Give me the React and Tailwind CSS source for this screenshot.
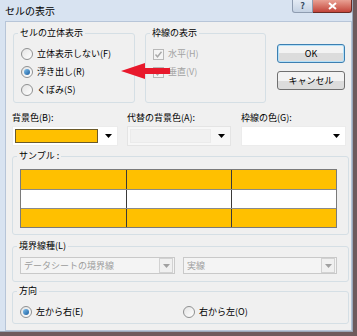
import React from "react"

const font = { fontFamily: "'Noto Sans CJK JP', 'Noto Sans', sans-serif" }

function Group({ label, className, children }) {
  return (
    <div className={`relative border border-[#d5dfe5] rounded-[3px] ${className}`}>
      <span className="absolute -top-[8px] left-[4px] px-[2px] bg-[#f0f0f0] text-[9px] leading-[14px] text-black">
        {label}
      </span>
      {children}
    </div>
  )
}

function Radio({ checked, label }) {
  return (
    <div className="flex items-center gap-[4px] h-[18px]">
      <span className="w-[12px] h-[12px] rounded-full border border-[#8f9091] bg-gradient-to-br from-[#e4e4e4] to-[#ffffff] flex items-center justify-center">
        {checked && <span className="w-[6px] h-[6px] rounded-full bg-gradient-to-br from-[#7fc2ef] to-[#1a5e9e]" />}
      </span>
      <span className="text-[9px] leading-[12px] text-black">{label}</span>
    </div>
  )
}

function Check({ label }) {
  return (
    <div className="flex items-center gap-[4px] h-[18px]">
      <span className="w-[11px] h-[11px] border border-[#b8b8b8] bg-[#f4f4f4] flex items-center justify-center">
        <svg width="9" height="9" viewBox="0 0 9 9">
          <path d="M1.5 4.5 L3.5 6.8 L7.5 1.8" fill="none" stroke="#a8a8a8" strokeWidth="1.4" />
        </svg>
      </span>
      <span className="text-[9px] leading-[12px] text-[#a3a3a3]">{label}</span>
    </div>
  )
}

function Arrow({ color = "#000" }) {
  return (
    <svg width="7" height="4" viewBox="0 0 7 4">
      <path d="M0 0 H7 L3.5 4 Z" fill={color} />
    </svg>
  )
}

function Picker({ width, swatch, disabled }) {
  return (
    <div
      className={`h-[20px] flex items-center pl-[2px] pr-[5px] border ${disabled ? "border-[#e4e4e4] bg-[#f7f7f7]" : "border-[#ececec] bg-white"}`}
      style={{ width }}
    >
      <div
        className={`h-[14px] flex-1 ${swatch ? "bg-[#ffc000] border border-[#6b5a2a]" : disabled ? "bg-[#f1f1f1] border border-[#ebebeb]" : ""}`}
      />
      <div className="w-[14px] flex justify-end">
        {!disabled && <Arrow />}
        {disabled && <Arrow />}
      </div>
    </div>
  )
}

function Combo({ width, text }) {
  return (
    <div className="h-[17px] flex items-center border border-[#c9c9c9] bg-[#f4f4f4]" style={{ width }}>
      <span className="flex-1 pl-[3px] text-[9px] leading-[12px] text-[#9c9c9c]">{text}</span>
      <div className="w-[14px] h-[15px] mr-[1px] border border-[#d2d2d2] bg-[#f0f0f0] flex items-center justify-center">
        <Arrow color="#a0a0a0" />
      </div>
    </div>
  )
}

function Button({ label, isDefault }) {
  return (
    <div
      className={`w-[68px] h-[19px] rounded-[3px] border flex items-center justify-center bg-gradient-to-b from-[#f3f3f3] from-50% to-[#dcdcdc] to-50% text-[9px] leading-[12px] text-black ${isDefault ? "border-[#3c7fb1] shadow-[inset_0_0_0_1px_#b4e0f8]" : "border-[#707070]"}`}
    >
      {label}
    </div>
  )
}

export default function App() {
  const rows = ["bg-[#ffc000]", "bg-white", "bg-[#ffc000]"]
  return (
    <div className="w-[357px] h-[336px] bg-[#6e5a5c] overflow-hidden" style={font}>
      <div className="w-[353px] h-[332px] bg-[#d8e3f1] border-r border-b border-[#9aa7b8] flex flex-col">
        {/* Title bar */}
        <div className="h-[21px] flex items-start pl-[5px]">
          <span className="text-[10px] leading-[14px] mt-[4px] text-black">セルの表示</span>
          <div className="ml-auto flex mr-[0px]">
            <div className="w-[21px] h-[13px] border border-[#8e9cb0] border-t-0 rounded-bl-[3px] bg-gradient-to-b from-[#e4ebf4] to-[#c5d2e3] flex items-center justify-center text-[9px] leading-[10px] font-bold text-[#384a62]">
              ?
            </div>
            <div className="w-[39px] h-[13px] border border-[#6b2a24] border-t-0 border-l-0 rounded-br-[3px] bg-gradient-to-b from-[#e8a093] to-[#c2433a] flex items-center justify-center">
              <svg width="9" height="8" viewBox="0 0 9 8">
                <path d="M1 1 L8 7 M8 1 L1 7" stroke="#fff" strokeWidth="2" />
              </svg>
            </div>
          </div>
        </div>

        {/* Client */}
        <div className="relative ml-[5px] w-[347px] h-[310px] bg-[#f0f0f0] border border-[#b7c5d8] text-black">
          {/* top row */}
          <div className="flex pl-[7px] mt-[11px]">
            <Group label="セルの立体表示" className="w-[122px] h-[70px]">
              <div className="flex flex-col pl-[7px] pt-[11px]">
                <Radio label="立体表示しない(F)" />
                <Radio label="浮き出し(R)" checked />
                <Radio label="くぼみ(S)" />
              </div>
            </Group>
            <Group label="枠線の表示" className="w-[121px] h-[70px] ml-[10px]">
              <div className="flex flex-col pl-[7px] pt-[11px]">
                <Check label="水平(H)" />
                <Check label="垂直(V)" />
              </div>
            </Group>
            <div className="ml-[11px] mt-[11px] flex flex-col gap-[8px]">
              <Button label="OK" isDefault />
              <Button label="キャンセル" />
            </div>
          </div>

          {/* color pickers */}
          <div className="flex pl-[6px] mt-[8px]">
            <div className="flex flex-col gap-[2px]">
              <span className="text-[9px] leading-[13px]">背景色(B):</span>
              <Picker width={106} swatch />
            </div>
            <div className="flex flex-col gap-[2px] ml-[9px]">
              <span className="text-[9px] leading-[13px]">代替の背景色(A):</span>
              <Picker width={104} disabled />
            </div>
            <div className="flex flex-col gap-[2px] ml-[10px]">
              <span className="text-[9px] leading-[13px]">枠線の色(G):</span>
              <Picker width={105} />
            </div>
          </div>

          {/* sample */}
          <Group label="サンプル :" className="ml-[6px] mt-[10px] w-[337px] h-[79px]">
            <div className="ml-[7px] mt-[12px] w-[317px] border border-[#7a7a7a]">
              {rows.map((bg, i) => (
                <div key={i} className={`flex h-[19px] ${i > 0 ? "border-t border-[#8a8a8a]" : ""}`}>
                  <div className={`w-[105px] ${bg}`} />
                  <div className={`w-[105px] border-l border-[#3a3a3a] ${bg}`} />
                  <div className={`flex-1 border-l border-[#3a3a3a] ${bg}`} />
                </div>
              ))}
            </div>
          </Group>

          {/* border style */}
          <Group label="境界線種(L)" className="ml-[6px] mt-[11px] w-[337px] h-[36px]">
            <div className="flex ml-[7px] mt-[10px] gap-[8px]">
              <Combo width={155} text="データシートの境界線" />
              <Combo width={154} text="実線" />
            </div>
          </Group>

          {/* direction */}
          <Group label="方向" className="ml-[6px] mt-[9px] w-[337px] h-[33px]">
            <div className="flex ml-[7px] mt-[11px]">
              <div className="w-[163px]">
                <Radio label="左から右(E)" checked />
              </div>
              <Radio label="右から左(O)" />
            </div>
          </Group>

          {/* red annotation arrow */}
          <svg className="absolute left-[115px] top-[40px]" width="49" height="18" viewBox="0 0 49 18">
            <path d="M0 9 L24 1 L24 6 L49 6 L49 12 L24 12 L24 17 Z" fill="#e8192c" />
          </svg>
        </div>
      </div>
    </div>
  )
}
